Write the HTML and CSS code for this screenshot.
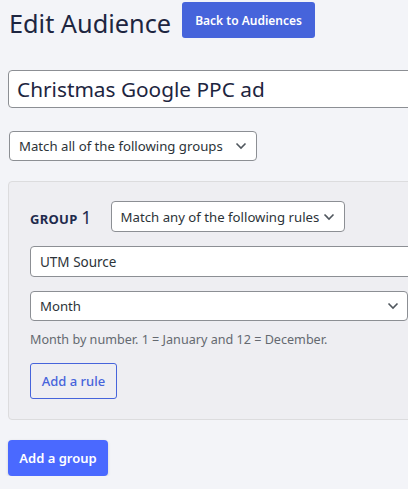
FILE: index.html
```html
<!DOCTYPE html>
<html lang="en">
<head>
<meta charset="utf-8">
<title>Edit Audience</title>
<link rel="stylesheet" href="styles.css">
</head>
<body>
<div class="page">
  <div class="header">
    <h1 class="title">Edit Audience</h1>
    <a class="btn btn-back" href="#">Back to Audiences</a>
  </div>
  <input class="name-input" type="text" value="Christmas Google PPC ad">
  <div class="select select-groups">
    <span class="select-text">Match all of the following groups</span>
    <svg class="chev" width="12" height="8" viewBox="0 0 12 8"><path d="M1.5 1.5 6 6l4.5-4.5" fill="none" stroke="#50575e" stroke-width="1.6"/></svg>
  </div>
  <div class="group">
    <div class="group-head">
      <span class="group-label">GROUP <span class="group-num">1</span></span>
      <div class="select select-rules">
        <span class="select-text">Match any of the following rules</span>
        <svg class="chev" width="12" height="8" viewBox="0 0 12 8"><path d="M1.5 1.5 6 6l4.5-4.5" fill="none" stroke="#50575e" stroke-width="1.6"/></svg>
      </div>
    </div>
    <div class="field field-utm">UTM Source</div>
    <div class="select select-month">
      <span class="select-text">Month</span>
      <svg class="chev" width="12" height="8" viewBox="0 0 12 8"><path d="M1.5 1.5 6 6l4.5-4.5" fill="none" stroke="#50575e" stroke-width="1.6"/></svg>
    </div>
    <p class="help">Month by number. 1 = January and 12 = December.</p>
    <a class="btn btn-outline" href="#">Add a rule</a>
  </div>
  <a class="btn btn-add-group" href="#">Add a group</a>
</div>
</body>
</html>
```
FILE: styles.css
```css
html { overflow: hidden; }
body {
  margin: 0;
  background: #f3f4f8;
  font-family: "Noto Sans", "Open Sans", sans-serif;
  color: #1d2327;
}
.page {
  width: 400px;
  padding: 2px 0 0 8px;
}
.header {
  display: flex;
  align-items: flex-start;
  gap: 11px;
}
.title {
  margin: 5px 0 0 1px;
  font-size: 25.3px;
  font-weight: 400;
  color: #1d2540;
  line-height: 32px;
  white-space: nowrap;
}
.btn {
  display: inline-flex;
  align-items: center;
  justify-content: center;
  text-decoration: none;
  border-radius: 3px;
  font-weight: 600;
  box-sizing: border-box;
  white-space: nowrap;
}
.btn-back {
  background: #4664db;
  color: #fff;
  height: 36px;
  width: 133px;
  font-size: 12px;
}
.name-input {
  display: block;
  margin-top: 31px;
  width: 420px;
  height: 38px;
  box-sizing: border-box;
  border: 1px solid #8c8f94;
  border-radius: 4px;
  background: #fff;
  padding: 0 8px;
  font-family: inherit;
  font-size: 20.8px;
  color: #1d2540;
  outline: none;
}
.select {
  display: flex;
  align-items: center;
  justify-content: space-between;
  box-sizing: border-box;
  border: 1px solid #8c8f94;
  border-radius: 4px;
  background: #fff;
  font-size: 13.2px;
  color: #2c3338;
  padding: 0 9px 0 9px;
  flex-shrink: 0;
}
.select-text { white-space: nowrap; }
.chev { flex-shrink: 0; }
.select-groups {
  margin: 23px 0 0 1px;
  width: 248px;
  height: 30px;
}
.group {
  margin-top: 20px;
  width: 460px;
  box-sizing: border-box;
  background: #eeeef2;
  border: 1px solid #dcdcde;
  border-radius: 4px;
  padding: 19px 0 20px 21px;
}
.group-head {
  display: flex;
  align-items: center;
  gap: 19px;
}
.group-label {
  font-size: 13px;
  font-weight: 700;
  letter-spacing: 0.3px;
  color: #1e2a4d;
  white-space: nowrap;
}
.group-num {
  font-size: 18px;
  font-weight: 400;
  letter-spacing: 0;
}
.select-rules {
  width: 234px;
  height: 31px;
  font-size: 13.2px;
  padding-right: 9px;
}
.field {
  box-sizing: border-box;
  border: 1px solid #8c8f94;
  border-radius: 4px;
  background: #fff;
  font-size: 13.5px;
  color: #2c3338;
  display: flex;
  align-items: center;
  padding: 0 9px;
}
.field-utm {
  margin-top: 14px;
  width: 420px;
  height: 31px;
}
.select-month {
  margin-top: 14px;
  width: 378px;
  height: 30px;
  padding-right: 8px;
}
.help {
  margin: 10px 0 0 0;
  font-size: 12.6px;
  color: #646970;
  line-height: 18px;
  white-space: nowrap;
}
.btn-outline {
  margin-top: 14px;
  width: 87px;
  height: 36px;
  border: 1px solid #4664db;
  color: #4664db;
  background: transparent;
  font-size: 13px;
  font-weight: 500;
}
.btn-add-group {
  margin-top: 20px;
  width: 100px;
  height: 36px;
  background: #4a69ff;
  color: #fff;
  font-size: 13px;
  border-radius: 4px;
  box-shadow: 0 1px 3px rgba(0,0,0,0.15);
}
```
